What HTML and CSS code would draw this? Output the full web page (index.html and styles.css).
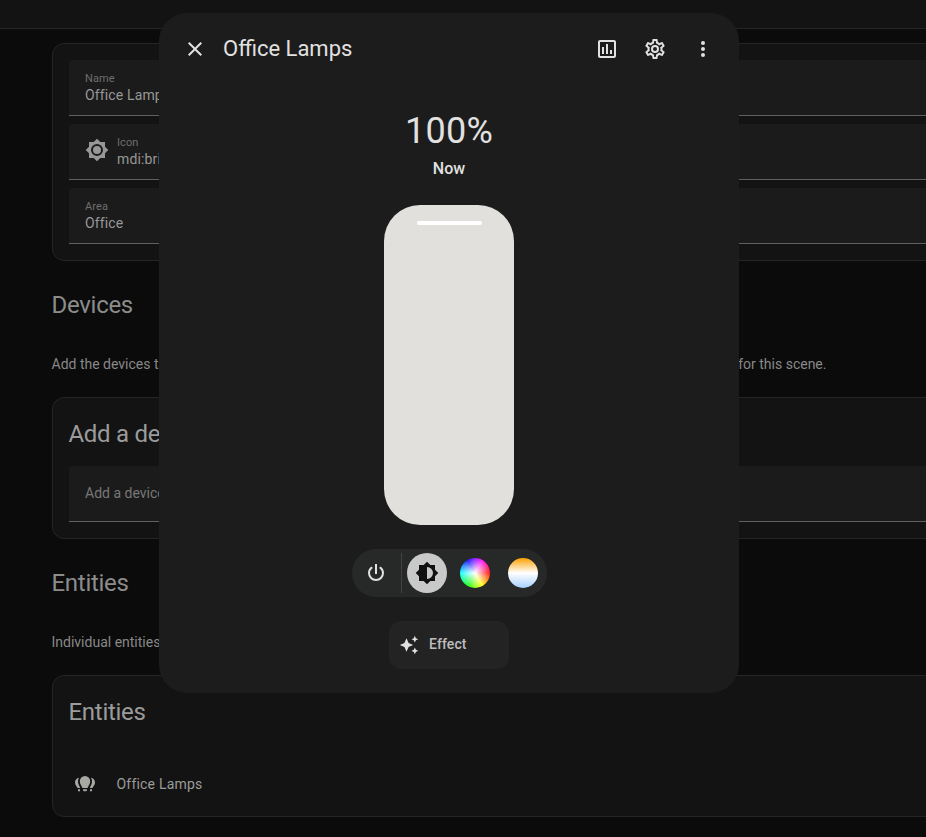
FILE: index.html
```html
<!DOCTYPE html>
<html lang="en">
<head>
<meta charset="utf-8">
<title>Office Lamps</title>
<link rel="stylesheet" href="styles.css">
</head>
<body>
<div class="page">
  <header class="toolbar"></header>
  <main class="content">
    <section class="card fields">
      <div class="field"><div><div class="label">Name</div><div class="value">Office Lamps</div></div></div>
      <div class="field with-icon">
        <svg class="icon" viewBox="0 0 24 24"><path d="M12,8A4,4 0 0,0 8,12A4,4 0 0,0 12,16A4,4 0 0,0 16,12A4,4 0 0,0 12,8M12,18A6,6 0 0,1 6,12A6,6 0 0,1 12,6A6,6 0 0,1 18,12A6,6 0 0,1 12,18M20,8.69V4H15.31L12,0.69L8.69,4H4V8.69L0.69,12L4,15.31V20H8.69L12,23.31L15.31,20H20V15.31L23.31,12L20,8.69Z"/></svg>
        <div><div class="label">Icon</div><div class="value">mdi:brightness-7</div></div>
      </div>
      <div class="field"><div><div class="label">Area</div><div class="value">Office</div></div></div>
    </section>
    <h2 class="heading">Devices</h2>
    <p class="intro spread"><span>Add the devices that you want to be included in your scene.</span> <span>Set all the devices to the state you want for this scene.</span></p>
    <section class="card">
      <h3 class="card-title">Add a device</h3>
      <div class="field picker">Add a device</div>
    </section>
    <h2 class="heading">Entities</h2>
    <p class="intro">Individual entities can be added here.</p>
    <section class="card">
      <h3 class="card-title">Entities</h3>
      <div class="entity">
        <svg class="icon" viewBox="0 0 24 24"><path d="M12,4A5.2,5.2 0 0,0 6.8,9.2C6.8,11.8 8.4,13 9,15.2C9.1,15.7 9.4,16 9.8,16H14.2C14.6,16 14.9,15.7 15,15.2C15.6,13 17.2,11.8 17.2,9.2A5.2,5.2 0 0,0 12,4M10,17.3V18C10,18.7 10.5,19.2 11.1,19.2H12.9C13.5,19.2 14,18.7 14,18V17.3H10M6,5.8C3.5,6.3 2,8.2 2,10.5C2,13 3.8,14 4.6,16H7.2C6.6,13.8 5,12.5 5,9.5C5,8.2 5.3,7 6,5.8M18,5.8C18.7,7 19,8.2 19,9.5C19,12.5 17.4,13.8 16.8,16H19.4C20.2,14 22,13 22,10.5C22,8.2 20.5,6.3 18,5.8M5,17.3V19.2H7V17.3H5M17,17.3V19.2H19V17.3H17Z"/></svg>
        <span>Office Lamps</span>
      </div>
    </section>
  </main>
</div>
<div class="dialog" role="dialog">
  <div class="dialog-head">
    <svg class="icon" viewBox="0 0 24 24"><path d="M19,6.41L17.59,5L12,10.59L6.41,5L5,6.41L10.59,12L5,17.59L6.41,19L12,13.41L17.59,19L19,17.59L13.41,12L19,6.41Z"/></svg>
    <h1 class="dialog-title">Office Lamps</h1>
    <div class="actions">
      <svg class="icon" viewBox="0 0 24 24"><path d="M9 17H7V10H9V17M13 17H11V7H13V17M17 17H15V13H17V17M19 19H5V5H19V19.1M19 3H5C3.9 3 3 3.9 3 5V19C3 20.1 3.9 21 5 21H19C20.1 21 21 20.1 21 19V5C21 3.9 20.1 3 19 3Z"/></svg>
      <svg class="icon" viewBox="0 0 24 24"><path d="M12,8A4,4 0 0,1 16,12A4,4 0 0,1 12,16A4,4 0 0,1 8,12A4,4 0 0,1 12,8M12,10A2,2 0 0,0 10,12A2,2 0 0,0 12,14A2,2 0 0,0 14,12A2,2 0 0,0 12,10M10,22C9.75,22 9.54,21.82 9.5,21.58L9.13,18.93C8.5,18.68 7.96,18.34 7.44,17.94L4.95,18.95C4.73,19.03 4.46,18.95 4.34,18.73L2.34,15.27C2.21,15.05 2.27,14.78 2.46,14.63L4.57,12.97L4.5,12L4.57,11L2.46,9.37C2.27,9.22 2.21,8.95 2.34,8.73L4.34,5.27C4.46,5.05 4.73,4.96 4.95,5.05L7.44,6.05C7.96,5.66 8.5,5.32 9.13,5.07L9.5,2.42C9.54,2.18 9.75,2 10,2H14C14.25,2 14.46,2.18 14.5,2.42L14.87,5.07C15.5,5.32 16.04,5.66 16.56,6.05L19.05,5.05C19.27,4.96 19.54,5.05 19.66,5.27L21.66,8.73C21.79,8.95 21.73,9.22 21.54,9.37L19.43,11L19.5,12L19.43,13L21.54,14.63C21.73,14.78 21.79,15.05 21.66,15.27L19.66,18.73C19.54,18.95 19.27,19.04 19.05,18.95L16.56,17.95C16.04,18.34 15.5,18.68 14.87,18.93L14.5,21.58C14.46,21.82 14.25,22 14,22H10M11.25,4L10.88,6.61C9.68,6.86 8.62,7.5 7.85,8.39L5.44,7.35L4.69,8.65L6.8,10.2C6.4,11.37 6.4,12.64 6.8,13.8L4.68,15.36L5.43,16.66L7.86,15.62C8.63,16.5 9.68,17.14 10.87,17.38L11.24,20H12.76L13.13,17.39C14.32,17.14 15.37,16.5 16.14,15.62L18.57,16.66L19.32,15.36L17.2,13.81C17.6,12.64 17.6,11.37 17.2,10.2L19.31,8.65L18.56,7.35L16.15,8.39C15.38,7.5 14.32,6.86 13.12,6.62L12.75,4H11.25Z"/></svg>
      <svg class="icon" viewBox="0 0 24 24"><path d="M12,16A2,2 0 0,1 14,18A2,2 0 0,1 12,20A2,2 0 0,1 10,18A2,2 0 0,1 12,16M12,10A2,2 0 0,1 14,12A2,2 0 0,1 12,14A2,2 0 0,1 10,12A2,2 0 0,1 12,10M12,4A2,2 0 0,1 14,6A2,2 0 0,1 12,8A2,2 0 0,1 10,6A2,2 0 0,1 12,4Z"/></svg>
    </div>
  </div>
  <div class="level">100%</div>
  <div class="when">Now</div>
  <div class="slider"><div class="handle"></div></div>
  <div class="modes">
    <div class="mode"><svg class="icon" viewBox="0 0 24 24"><path d="M16.56,5.44L15.11,6.89C16.84,7.94 18,9.83 18,12A6,6 0 0,1 12,18A6,6 0 0,1 6,12C6,9.83 7.16,7.94 8.88,6.88L7.44,5.44C5.36,6.88 4,9.28 4,12A8,8 0 0,0 12,20A8,8 0 0,0 20,12C20,9.28 18.64,6.88 16.56,5.44M13,3H11V13H13"/></svg></div>
    <div class="divider"></div>
    <div class="mode selected"><svg class="icon" viewBox="0 0 24 24"><path d="M12,18V6A6,6 0 0,1 18,12A6,6 0 0,1 12,18M20,15.31L23.31,12L20,8.69V4H15.31L12,0.69L8.69,4H4V8.69L0.69,12L4,15.31V20H8.69L12,23.31L15.31,20H20V15.31Z"/></svg></div>
    <div class="mode"><div class="swatch color"></div></div>
    <div class="mode"><div class="swatch temperature"></div></div>
  </div>
  <div class="effect">
    <svg class="icon small" viewBox="0 0 24 24"><path d="M19,1L17.74,3.75L15,5L17.74,6.26L19,9L20.25,6.26L23,5L20.25,3.75M9,4L6.5,9.5L1,12L6.5,14.5L9,20L11.5,14.5L17,12L11.5,9.5M19,15L17.74,17.74L15,19L17.74,20.25L19,23L20.25,20.25L23,19L20.25,17.74"/></svg>
    <span>Effect</span>
  </div>
</div>
</body>
</html>
```
FILE: styles.css
```css
* { box-sizing: border-box; }
body { margin: 0; height: 837px; overflow: hidden; position: relative; background: #0b0b0b; font-family: Roboto, sans-serif; font-size: 14px; }
h1, h2, h3, p { margin: 0; font-weight: 400; white-space: nowrap; }
.icon { display: block; flex: none; width: 24px; height: 24px; fill: currentColor; }
.icon.small { width: 20px; height: 20px; }

.page { height: 837px; overflow: hidden; color: #979797; }
.toolbar { height: 29px; background: #131313; border-bottom: 1px solid #252525; }
.content { width: 1040px; padding: 14px 0 0 52px; }
.card { background: #131313; border: 1px solid #252525; border-radius: 12px; padding: 16px; }
.fields { display: flex; flex-direction: column; gap: 8px; }
.field { height: 56px; padding: 0 16px; display: flex; align-items: center; background: #1b1b1b; border-bottom: 1px solid #606060; border-radius: 4px 4px 0 0; white-space: nowrap; }
.with-icon { gap: 8px; }
.with-icon .icon { color: #979797; margin-top: -4px; }
.label { font-size: 11px; line-height: 14px; color: #6e6e6e; padding-top: 2px; margin-bottom: -1px; letter-spacing: 0.1px; }
.value { line-height: 20px; letter-spacing: 0.14px; }
.heading { font-size: 24px; line-height: 32px; margin: 28px 0 0 -0.5px; letter-spacing: -0.288px; color: #8c8c8c; }
.intro { line-height: 20px; margin: 33px 0 23px -0.5px; color: #888; }
.spread { width: 775px; display: flex; justify-content: space-between; }
.card-title { font-size: 24px; line-height: 40px; margin: 0 0 12px -0.5px; letter-spacing: -0.288px; color: #9b9b9b; }
.picker { color: #787878; padding-bottom: 2px; }
.entity { height: 56px; padding: 24px 4px 0; display: flex; align-items: center; gap: 19.5px; letter-spacing: 0.2px; color: #9b9b9b; }
.entity .icon { color: #a9a9a4; }

.dialog { position: absolute; left: 159px; top: 13px; width: 580px; height: 680px; border-radius: 28px; background: #1c1c1c; color: #e1e1e1; display: flex; flex-direction: column; align-items: center; }
.dialog-head { align-self: stretch; height: 72px; padding: 0 24px; display: flex; align-items: center; gap: 16px; }
.dialog-title { font-size: 22px; line-height: 28px; flex: 1; }
.actions { display: flex; gap: 24px; }
.level { font-size: 36px; line-height: 44px; margin-top: 24px; letter-spacing: 0.25px; }
.when { font-size: 16px; font-weight: 500; line-height: 24px; margin-top: 4px; letter-spacing: 0.1px; }
.slider { width: 130px; height: 320px; margin-top: 24px; padding-top: 16px; border-radius: 36px; background: #e1e0dc; }
.handle { width: 65px; height: 4px; border-radius: 2px; background: #fff; margin: 0 auto; }
.modes { margin-top: 24px; width: 195px; height: 48px; padding: 4px; border-radius: 24px; background: #272928; display: flex; align-items: center; }
.mode { width: 40px; height: 40px; border-radius: 50%; display: flex; align-items: center; justify-content: center; }
.mode + .mode { margin-left: 8px; }
.divider { width: 1px; height: 40px; margin: 0 5px; background: #424443; }
.selected { background: #c9c9c9; color: #111; }
.swatch { width: 30px; height: 30px; border-radius: 50%; }
.color { background: radial-gradient(closest-side, #fff 0%, rgba(255,255,255,0.55) 50%, rgba(255,255,255,0.1) 100%), conic-gradient(from 90deg, #f00, #ff0, #0f0, #0ff, #00f, #f0f, #f00); }
.temperature { background: linear-gradient(#ffa000 0%, #fff 50%, #a6d1ff 100%); }
.effect { margin-top: 24px; width: 120px; height: 48px; padding: 0 10px; border-radius: 12px; background: #232323; display: flex; align-items: center; gap: 10px; font-weight: 500; letter-spacing: 0.1px; color: #bebebe; }
.effect span { margin-top: -2px; }
.effect .icon { color: #e1e1e1; }
```
